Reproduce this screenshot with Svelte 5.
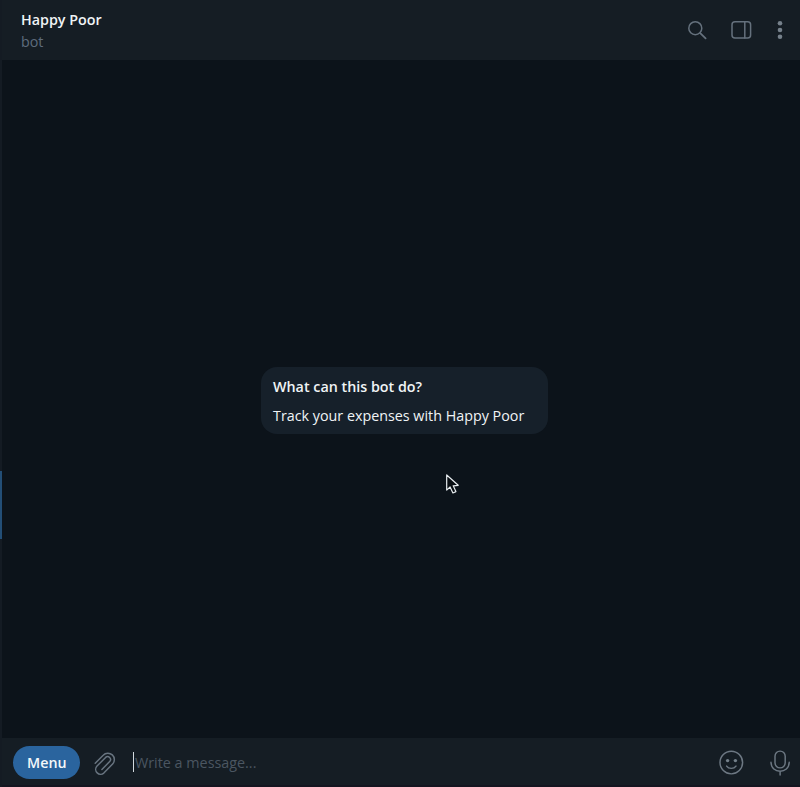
<script>
  const title = 'Happy Poor';
</script>

<div class="window">
  <div class="edge"><span></span></div>
  <main>
    <header>
      <div class="peer">
        <h1>{title}</h1>
        <p>bot</p>
      </div>
      <svg class="tools" width="130" height="60" viewBox="670 0 130 60" fill="none" stroke="#65717d" stroke-width="1.5" stroke-linecap="round">
        <circle cx="695.3" cy="28.2" r="6.5" />
        <path d="m700.2 33.1 5.4 5.2" stroke-width="1.8" />
        <rect x="732" y="21.7" width="18.6" height="16.4" rx="3" />
        <path d="M744.8 22v16" />
        <g fill="#76818b" stroke="none">
          <circle cx="780" cy="23.3" r="2.3" />
          <circle cx="780" cy="30" r="2.3" />
          <circle cx="780" cy="36.7" r="2.3" />
        </g>
      </svg>
    </header>
    <section class="chat">
      <article>
        <h2>What can this bot do?</h2>
        <p>Track your expenses with {title}</p>
      </article>
      <svg class="pointer" width="16" height="24" viewBox="444 472 16 24">
        <path d="M446.7 475v15.1l3.4-3.1 2.8 6 3-1.4-2.7-5.8 5-.5Z" fill="#080d12" stroke="#e9eef1" stroke-width="1.2" stroke-linejoin="round" />
      </svg>
    </section>
    <footer>
      <button><span>Menu</span></button>
      <svg class="clip" width="26" height="28" viewBox="92 749 26 28" fill="none" stroke="#697581" stroke-width="1.45" stroke-linecap="round" stroke-linejoin="round">
        <path d="M95 763.6l8-8a6.4 6.4 0 0 1 9.4 8.8l-8.8 9.1a4.9 4.9 0 0 1-7-6.8l8.8-8.9a2.9 2.9 0 0 1 4.1 4.1l-7.8 7.9" transform="translate(.2 .6)" />
      </svg>
      <div class="message"><i></i><span>Write a message...</span></div>
      <svg class="actions" width="90" height="46" viewBox="710 739 90 46" fill="none" stroke="#6d7883" stroke-width="1.45" stroke-linecap="round">
        <circle cx="731.3" cy="762.6" r="11.3" />
        <circle cx="727.6" cy="760.6" r="1.7" fill="#74808a" stroke="none" />
        <circle cx="735.4" cy="760.6" r="1.7" fill="#74808a" stroke="none" />
        <path d="M726.6 766.1c2.1 3 7.3 3 9.4 0" />
        <rect x="775" y="751.1" width="10.2" height="16.8" rx="5.1" />
        <path d="M771 762.3c0 12 18.2 12 18.2 0M780.1 771.5v3.5" />
      </svg>
    </footer>
  </main>
</div>

<style>
  :global(body) { margin: 0; background: #0c131a; }
  .window { width: 800px; height: 787px; display: flex; overflow: hidden; font: 15px/20px "Open Sans", sans-serif; color: #f0f4f6; }
  .edge { width: 2px; box-sizing: border-box; padding-top: 471px; background: #141b23; }
  .edge span { display: block; height: 68px; background: #234e76; }
  main { width: 798px; display: flex; flex-direction: column; }
  h1, h2, p { margin: 0; white-space: nowrap; transform: translateY(-.5px) scaleX(.954); transform-origin: left; }
  h1, h2 { font-size: 15px; font-weight: 600; line-height: 20px; }
  header { height: 60px; flex: none; display: flex; justify-content: space-between; background: #151d24; }
  .peer { padding: 9px 0 0 19px; }
  .peer p { margin-top: 2px; color: #5e6c7d; }
  .chat { flex: 1; position: relative; background: #0c131a; }
  article { box-sizing: border-box; width: 287px; height: 67px; margin: 307px 0 0 259px; padding: 9px 12px; border-radius: 16px; background: #16202a; }
  article p { margin-top: 9px; }
  .pointer { position: absolute; left: 442px; top: 412px; }
  footer { height: 49px; flex: none; box-sizing: border-box; border-bottom: 2px solid #141520; display: flex; align-items: center; background: #151d24; }
  button { width: 67px; height: 33px; margin: 1px 0 0 11px; padding: 0; border: 0; border-radius: 17px; background: #2a649e; color: #f4f8fa; font: 600 15px/20px "Open Sans", sans-serif; }
  button span { display: inline-block; transform: scaleX(.95); }
  .clip { margin: 1px 0 0 12px; }
  .message { flex: 1; display: flex; align-items: center; margin-left: 15px; color: #4b5661; }
  .message i { width: 1px; height: 20px; background: #d2dade; margin-right: 1px; }
  .message span { transform: translateY(-.5px) scaleX(.956); transform-origin: left; }
  svg { display: block; flex: none; }
</style>
